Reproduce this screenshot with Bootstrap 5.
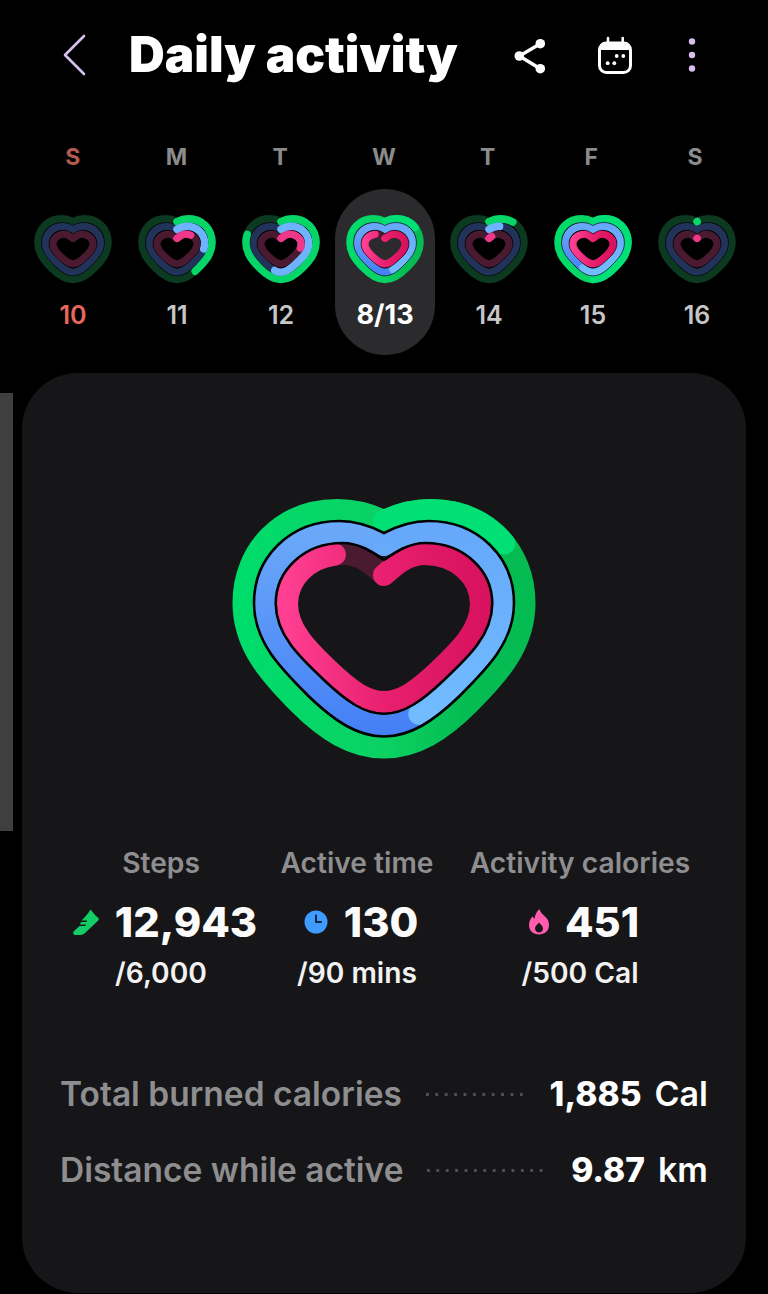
<!DOCTYPE html>
<html lang="en">
<head>
  <meta charset="UTF-8" />
  <title>Daily activity</title>
  <link href="https://cdn.jsdelivr.net/npm/bootstrap@5.3.3/dist/css/bootstrap.min.css" rel="stylesheet">
  <style>
    html, body { height: 1294px; overflow: hidden; }
    body { background: #000; color: #fff; font-family: Inter, "Noto Sans", sans-serif; }
    .svg-defs { display: block; width: 0; height: 0; }

    .top-bar { height: 110px; padding-left: 63px; }
    .top-title { font-size: 49.5px; font-weight: 900; line-height: 1; margin: 0 0 0 42px; color: #fff; }
    .ico-back { width: 24px; height: 42px; }
    .ico-share { width: 36px; height: 40px; margin-left: 55px; }
    .ico-cal { width: 36px; height: 40px; margin-left: 48px; }
    .ico-dots { width: 10px; height: 40px; margin-left: 54px; }

    .week-row { display: grid; grid-template-columns: repeat(7, 104px); padding-left: 21px; }
    .wk-letter { text-align: center; font-size: 23px; font-weight: 700; line-height: 28px; color: #8b8b8b; }
    .wk-letter.sun { color: #b25a52; }
    .wk-labels { grid-template-columns: repeat(7, 103.7px); margin-top: 33px; margin-bottom: 18px; }
    .wk-day { margin: 0 2px; padding: 21px 0 25px; border-radius: 50px; text-align: center; height: 166px; }
    .wk-day.sel { background: #2b2b2d; }
    .wk-day svg { display: block; width: 90px; height: 79px; margin: 0 auto 11px; }
    .wk-num { font-size: 25px; font-weight: 600; line-height: 30px; color: #c6c6c6; }
    .wk-num.sun { color: #e8675c; }
    .wk-day.sel .wk-num { color: #fff; font-size: 27px; font-weight: 700; }

    .main-card { background: #161618; border-radius: 56px; margin: 18px 22px 0; height: 920px; padding-top: 107px; }
    .big-heart { display: block; width: 350px; height: 300px; margin: 0 auto; }

    .stat-grid { display: grid; grid-template-columns: 200px 192px 254px; margin: 65px 0 0 39px; text-align: center; }
    .stat-label { font-size: 28.2px; font-weight: 600; line-height: 36px; color: #8e8e90; }
    .stat-value { font-size: 41.6px; font-weight: 800; line-height: 50px; margin-top: 16px; padding-left: 8px; color: #fbfbfb; }
    .stat-goal { font-size: 28.2px; font-weight: 600; line-height: 36px; margin-top: 8px; color: #f2f2f2; }

    .sum-row { height: 40px; margin: 0 38px; line-height: 40px; }
    .sum-row.first { margin-top: 83px; }
    .sum-row.second { margin-top: 36px; }
    .sum-label { font-size: 33.5px; font-weight: 600; color: #8e8e90; }
    .sum-dots { flex: 1 1 auto; height: 3px; margin: 0 24px; background: radial-gradient(circle at 1.5px 1.5px, #505052 1.5px, transparent 1.6px) left center / 9.4px 3px repeat-x; }
    .sum-val { font-size: 33.5px; font-weight: 800; color: #fff; }
    .sum-unit { font-size: 34px; font-weight: 600; color: #fff; margin-left: 13px; }

    .side-scroll { position: absolute; left: 0; top: 393px; width: 13px; height: 438px; background: #3f3f40; }

    .hg { stroke: #0b3a21; }
    .hb { stroke: #22335a; }
    .hp { stroke: #4a1a30; }
    .ag { stroke: #06d567; }
    .ab { stroke: #6fb2ff; }
    .ap { stroke: #f0388a; }
    .sep { fill: none; stroke: #000; stroke-width: 2.6; }
    .rg, .rb, .rp { fill: none; stroke-width: 22; stroke-linecap: round; stroke-linejoin: round; }
    .wk-day .rg, #miniDim .rg { stroke-width: 30; }
    .wk-day .rb, #miniDim .rb { stroke-width: 32; }
    .wk-day .rp, #miniDim .rp { stroke-width: 36; }
    .bg-green { stroke: url(#gradGreen); }
    .bg-blue { stroke: url(#gradBlue); }
    .tip-green { stroke: #00e074; }
    .tip-blue { stroke: url(#gradBlueTip); }
    .tip-pink { stroke: url(#gradPink); }
  </style>
</head>
<body class="position-relative">

  <svg class="svg-defs" aria-hidden="true">
    <defs>
      <linearGradient id="gradGreen" gradientUnits="userSpaceOnUse" x1="33" y1="0" x2="314" y2="0">
        <stop offset="0" stop-color="#00dc6b" /><stop offset="0.5" stop-color="#0bd163" /><stop offset="0.8" stop-color="#04bc51" /><stop offset="1" stop-color="#04bc51" />
      </linearGradient>
      <linearGradient id="gradBlue" gradientUnits="userSpaceOnUse" x1="0" y1="50" x2="0" y2="250">
        <stop offset="0" stop-color="#6aa9f9" /><stop offset="1" stop-color="#4680f6" />
      </linearGradient>
      <linearGradient id="gradBlueTip" gradientUnits="userSpaceOnUse" x1="0" y1="50" x2="0" y2="250">
        <stop offset="0" stop-color="#66a8fb" /><stop offset="1" stop-color="#72bdff" />
      </linearGradient>
      <linearGradient id="gradPink" gradientUnits="userSpaceOnUse" x1="76" y1="0" x2="271" y2="0">
        <stop offset="0" stop-color="#ff3f92" /><stop offset="0.5" stop-color="#e8206f" /><stop offset="1" stop-color="#d8125e" />
      </linearGradient>

      <!-- big heart rings, all start at the notch and go clockwise -->
      <path id="ringG" pathLength="100" d="M173.5 41C188 34 202 30 220 30C275 30 314 70 314 123C314 165 288 194 258 224C232 250 205 267.5 173.5 267.5C142 267.5 115 250 89 224C59 194 33 165 33 123C33 70 72 30 127 30C145 30 159 34 173.5 41Z" />
      <path id="ringB" pathLength="100" d="M173.5 65C186 58 200 52 216 52C260 52 293 84 293 123C293 160 265 185 238 210C215 232 195 245.5 173.5 245.5C152 245.5 132 232 109 210C82 185 54 160 54 123C54 84 87 52 131 52C147 52 161 58 173.5 65Z" />
      <path id="ringP" pathLength="100" d="M173.5 95C184 86 196 74 214 74C246 74 270.5 96 270.5 124C270.5 150 250 170 229 190C208 210 192 222 173.5 222C155 222 139 210 118 190C97 170 76.5 150 76.5 124C76.5 96 101 74 133 74C151 74 163 86 173.5 95Z" />
      <path id="sepA" class="sep" d="M173.5 53C187 46 201 41 218 41C267.5 41 303.5 77 303.5 123C303.5 162.5 276 189 248 217C223 241 200 256.5 173.5 256.5C147 256.5 124 241 99 217C71 189 43.5 162.5 43.5 123C43.5 77 79.5 41 129 41C146 41 160 46 173.5 53Z" />
      <path id="sepB" class="sep" d="M173.5 80C185 72 198 63 215 63C253 63 281.75 90 281.75 123.5C281.75 155 257.5 177.5 233.5 200C211.5 221 193.5 233.75 173.5 233.75C153.5 233.75 135.5 221 113.5 200C89.5 177.5 65.25 155 65.25 123.5C65.25 90 94 63 132 63C149 63 162 72 173.5 80Z" />

      <!-- week hearts have fatter rings, so the inner ones sit closer to the middle -->
      <use id="miniG" href="#ringG" transform="translate(173.5 147) scale(.97) translate(-173.5 -147)" />
      <use id="miniB" href="#ringB" transform="translate(173.5 152) scale(.9) translate(-173.5 -152)" />
      <use id="miniP" href="#ringP" transform="translate(173.5 149) scale(.81 .76) translate(-173.5 -149)" />
      <g id="miniSeps">
        <use href="#sepA" transform="translate(173.5 150) scale(.94) translate(-173.5 -150)" />
        <use href="#sepB" transform="translate(173.5 150) scale(.86 .84) translate(-173.5 -150)" />
      </g>
      <g id="miniDim">
        <use href="#miniG" class="rg hg" />
        <use href="#miniB" class="rb hb" />
        <use href="#miniP" class="rp hp" />
        <use href="#miniSeps" />
      </g>
    </defs>
  </svg>

  <div class="side-scroll"></div>

  <header class="top-bar d-flex align-items-center">
    <svg class="ico-back" viewBox="0 0 24 42"><path d="M21 2 2 21l19 19" fill="none" stroke="#d8c0ee" stroke-width="2.6" stroke-linecap="round" stroke-linejoin="round" /></svg>
    <h1 class="top-title">Daily activity</h1>
    <svg class="ico-share" viewBox="0 0 36 40">
      <path d="M27.3 8.7 6.3 21l21 12.7" fill="none" stroke="#fff" stroke-width="3.4" />
      <circle cx="27.3" cy="8.7" r="4.8" fill="#fff" /><circle cx="6.3" cy="21" r="4.8" fill="#fff" /><circle cx="27.3" cy="33.7" r="4.8" fill="#fff" />
    </svg>
    <svg class="ico-cal" viewBox="0 0 36 40">
      <rect x="2.5" y="8" width="31" height="29.5" rx="7" fill="none" stroke="#fff" stroke-width="3" />
      <path d="M3 15V12a5 5 0 0 1 5-5h20a5 5 0 0 1 5 5v3Z" fill="#fff" />
      <path d="M11 3v5M25.7 3v5" stroke="#fff" stroke-width="2.6" stroke-linecap="round" />
      <circle cx="10.7" cy="28.2" r="1.9" fill="#fff" /><circle cx="17.3" cy="28.2" r="1.9" fill="#fff" /><circle cx="19.7" cy="21" r="1.9" fill="#fff" /><circle cx="26.3" cy="21" r="1.9" fill="#fff" />
    </svg>
    <svg class="ico-dots" viewBox="0 0 10 40">
      <circle cx="5" cy="6.5" r="3.2" fill="#d9bdea" /><circle cx="5" cy="20" r="3.2" fill="#d9bdea" /><circle cx="5" cy="33.5" r="3.2" fill="#d9bdea" />
    </svg>
  </header>

  <div class="week-row wk-labels">
    <div class="wk-letter sun">S</div>
    <div class="wk-letter">M</div>
    <div class="wk-letter">T</div>
    <div class="wk-letter">W</div>
    <div class="wk-letter">T</div>
    <div class="wk-letter">F</div>
    <div class="wk-letter">S</div>
  </div>

  <div class="week-row">
    <div class="wk-day">
      <svg viewBox="-1.5 0 350 300" preserveAspectRatio="none"><use href="#miniDim" /></svg>
      <div class="wk-num sun">10</div>
    </div>
    <div class="wk-day">
      <svg viewBox="-1.5 0 350 300" preserveAspectRatio="none">
        <use href="#miniDim" />
        <use href="#miniG" class="rg ag" stroke-dasharray="40 200" />
        <use href="#miniB" class="rb ab" stroke-dasharray="27 200" />
        <use href="#miniP" class="rp ap" stroke-dasharray="13 200" />
      </svg>
      <div class="wk-num">11</div>
    </div>
    <div class="wk-day">
      <svg viewBox="-1.5 0 350 300" preserveAspectRatio="none">
        <use href="#miniDim" />
        <use href="#miniG" class="rg ag" stroke-dasharray="80 200" />
        <use href="#miniB" class="rb ab" stroke-dasharray="54 200" />
        <use href="#miniP" class="rp ap" stroke-dasharray="27 200" />
      </svg>
      <div class="wk-num">12</div>
    </div>
    <div class="wk-day sel">
      <svg viewBox="-1.5 0 350 300" preserveAspectRatio="none">
        <use href="#miniG" class="rg bg-green" />
        <use href="#miniG" class="rg tip-green" stroke-dasharray="16 200" />
        <use href="#miniB" class="rb bg-blue" />
        <use href="#miniB" class="rb tip-blue" stroke-dasharray="44.5 200" />
        <use href="#miniP" class="rp hp" />
        <use href="#miniP" class="rp tip-pink" stroke-dasharray="90 200" />
        <use href="#miniSeps" />
      </svg>
      <div class="wk-num">8/13</div>
    </div>
    <div class="wk-day">
      <svg viewBox="-1.5 0 350 300" preserveAspectRatio="none">
        <use href="#miniDim" />
        <use href="#miniG" class="rg ag" stroke-dasharray="12 200" />
        <use href="#miniB" class="rb ab" stroke-dasharray="7 200" />
        <use href="#miniP" class="rp ap" stroke-dasharray="3 200" />
      </svg>
      <div class="wk-num">14</div>
    </div>
    <div class="wk-day">
      <svg viewBox="-1.5 0 350 300" preserveAspectRatio="none">
        <use href="#miniG" class="rg bg-green" />
        <use href="#miniG" class="rg tip-green" stroke-dasharray="50 200" />
        <use href="#miniB" class="rb bg-blue" />
        <use href="#miniB" class="rb tip-blue" stroke-dasharray="57 200" />
        <use href="#miniP" class="rp tip-pink" />
        <use href="#miniSeps" />
      </svg>
      <div class="wk-num">15</div>
    </div>
    <div class="wk-day">
      <svg viewBox="-1.5 0 350 300" preserveAspectRatio="none">
        <use href="#miniDim" />
        <use href="#miniG" class="rg ag" stroke-dasharray="0.1 200" />
        <use href="#miniP" class="rp ap" stroke-dasharray="0.1 200" />
      </svg>
      <div class="wk-num">16</div>
    </div>
  </div>

  <main class="main-card">
    <svg class="big-heart" viewBox="-1.5 0 350 300">
      <use href="#ringG" class="rg bg-green" />
      <use href="#ringG" class="rg tip-green" stroke-dasharray="16 200" />
      <use href="#ringB" class="rb bg-blue" />
      <use href="#ringB" class="rb tip-blue" stroke-dasharray="44.5 200" />
      <use href="#ringP" class="rp hp" />
      <use href="#ringP" class="rp tip-pink" stroke-dasharray="90 200" />
      <use href="#sepA" />
      <use href="#sepB" />
    </svg>

    <div class="stat-grid">
      <div>
        <div class="stat-label">Steps</div>
        <div class="stat-value d-flex justify-content-center align-items-center gap-3">
          <svg width="26" height="26" viewBox="0 0 26 26"><path d="M17.5 0.5 20 3.5C21.5 5.5 23.5 7.5 25.5 9C26 9.8 25.8 11 25 11.8L12 24C10.8 25.3 9 26 7.2 26H2.5C0.5 26 -0.5 24 0.8 22.3C2.5 20.5 4.5 19 6.5 17H12.5L13 15.5H7L8 13H13.5L14 11.5H8.5C11.5 8.5 15 5 17.5 0.5Z" fill="#13ce66" /></svg>
          <span>12,943</span>
        </div>
        <div class="stat-goal">/6,000</div>
      </div>
      <div>
        <div class="stat-label">Active time</div>
        <div class="stat-value d-flex justify-content-center align-items-center gap-3">
          <svg width="24" height="24" viewBox="0 0 24 24"><circle cx="12" cy="12" r="11.5" fill="#3f9bff" /><path d="M12 5.5V12h5" fill="none" stroke="#10233d" stroke-width="2" stroke-linecap="round" stroke-linejoin="round" /></svg>
          <span>130</span>
        </div>
        <div class="stat-goal">/90 mins</div>
      </div>
      <div>
        <div class="stat-label">Activity calories</div>
        <div class="stat-value d-flex justify-content-center align-items-center gap-3">
          <svg width="20" height="26" viewBox="0 0 20 26"><path d="M10.5 0C11.5 4 14 5.5 16 7.5C19 10 20 13 20 16C20 22 15.5 25.5 10 25.5C4.5 25.5 0 22 0 16C0 12 2 9.5 3.5 7.5L5.5 10C6 6 7.5 2.5 10.5 0Z" fill="#ff5cb0" /><path d="M10 13.5C11.5 15.5 14 17 14 19.5C14 22 12 23.5 10 23.5C8 23.5 6 22 6 19.5C6 17 8.5 15.5 10 13.5Z" fill="#161618" /></svg>
          <span>451</span>
        </div>
        <div class="stat-goal">/500 Cal</div>
      </div>
    </div>

    <div class="sum-row first d-flex align-items-center">
      <span class="sum-label">Total burned calories</span>
      <span class="sum-dots"></span>
      <span class="sum-val">1,885</span>
      <span class="sum-unit">Cal</span>
    </div>
    <div class="sum-row second d-flex align-items-center">
      <span class="sum-label">Distance while active</span>
      <span class="sum-dots"></span>
      <span class="sum-val">9.87</span>
      <span class="sum-unit">km</span>
    </div>
  </main>

  <script src="https://cdn.jsdelivr.net/npm/bootstrap@5.3.3/dist/js/bootstrap.bundle.min.js"></script>
</body>
</html>
